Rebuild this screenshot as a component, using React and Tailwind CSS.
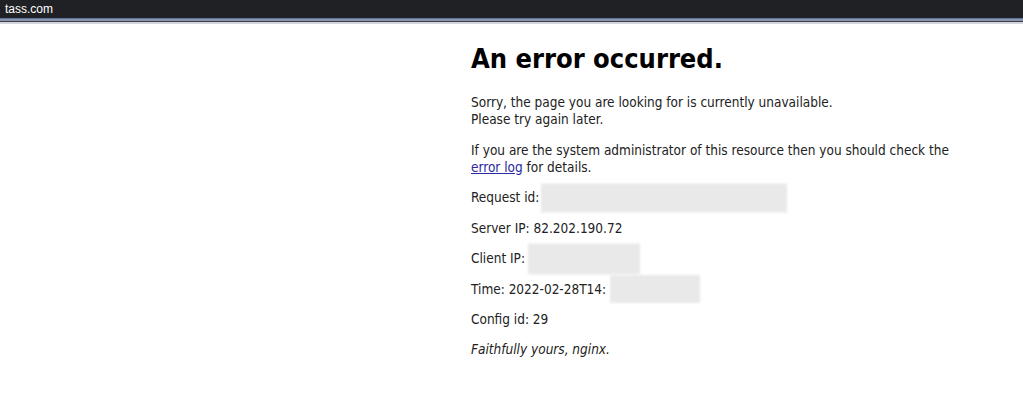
function Redact({ w, h, ml }) {
  return (
    <span className="relative inline-block align-top h-[17px]" style={{ width: w, marginLeft: ml }}>
      <span className="absolute left-0 top-1/2 -translate-y-1/2 bg-[#e9e9e9] blur-[1px]" style={{ width: w, height: h }} />
    </span>
  );
}

export default function App() {
  const font = { fontFamily: '"DejaVu Sans Condensed", "DejaVu Sans", sans-serif', fontStretch: 'condensed' };
  return (
    <div className="w-[1023px] h-[419px] bg-white overflow-hidden flex flex-col">
      <div className="h-[18px] bg-[#202124] flex items-center pl-[5px]">
        <span className="text-white text-[12px] leading-none font-['Liberation_Sans',sans-serif]">tass.com</span>
      </div>
      <div className="h-[1px] bg-[#5c7aa0]" />
      <div className="h-[2px] bg-[#8c94ab]" />
      <div className="h-[1px] bg-[#3a3e47]" />
      <div className="h-[2px] bg-[#d2d5de]" />
      <div className="pl-[471px] pt-[19px] text-[#222] text-[13.5px] leading-[17px]" style={font}>
        <div className="w-[500px]">
          <h1 className="text-[27px] leading-[32px] font-bold text-black mb-[19px]">An error occurred.</h1>
          <p className="mb-[13.5px]">Sorry, the page you are looking for is currently unavailable.<br />Please try again later.</p>
          <p className="mb-[13.5px]">If you are the system administrator of this resource then you should check the <a className="text-[#2a2aa0] underline">error log</a> for details.</p>
          <p className="mb-[13.5px]">Request id:<Redact w={246} h={29} ml={2} /></p>
          <p className="mb-[13.5px]">Server IP: 82.202.190.72</p>
          <p className="mb-[13.5px]">Client IP:<Redact w={112} h={31} ml={3} /></p>
          <p className="mb-[13px]">Time: 2022-02-28T14:<Redact w={90} h={28} ml={4} /></p>
          <p className="mb-[13px]">Config id: 29</p>
          <p className="italic">Faithfully yours, nginx.</p>
        </div>
      </div>
    </div>
  );
}
